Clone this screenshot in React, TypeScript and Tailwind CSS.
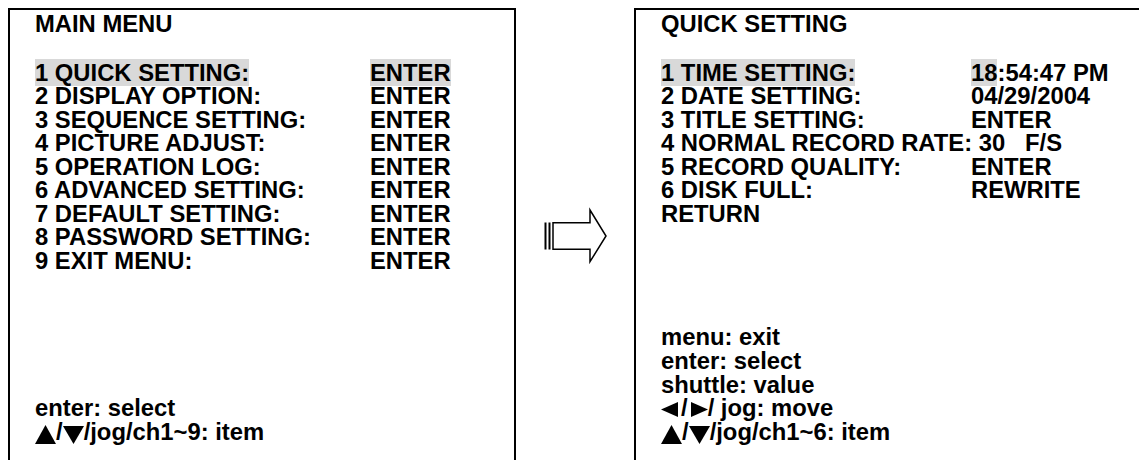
import React from "react";

const font = { fontFamily: '"Liberation Sans", Arial, Helvetica, sans-serif' };

function Up() {
  return (
    <svg width="21" height="19" viewBox="0 0 21 19" className="inline-block align-[-4px]">
      <path d="M10.5 0 L21 19 H0 Z" fill="#000" />
    </svg>
  );
}
function Down() {
  return (
    <svg width="21" height="18" viewBox="0 0 21 18" className="inline-block align-[-4px]">
      <path d="M0 0 H21 L10.5 18 Z" fill="#000" />
    </svg>
  );
}
function Left() {
  return (
    <svg width="18" height="15" viewBox="0 0 18 15" className="inline-block align-[-1px] mr-[2px]">
      <path d="M0 7.5 L17 0 V15 Z" fill="#000" />
    </svg>
  );
}
function Right() {
  return (
    <svg width="18" height="15" viewBox="0 0 18 15" className="inline-block align-[-1px] ml-[2px]">
      <path d="M1 0 L18 7.5 L1 15 Z" fill="#000" />
    </svg>
  );
}

function Panel({
  title,
  rows,
  labelWidth,
  footer,
  width,
}: {
  title: string;
  rows: React.ReactNode[][];
  labelWidth: string;
  footer: React.ReactNode[];
  width: string;
}) {
  return (
    <div
      className={`${width} h-[470px] shrink-0 border-x-2 border-t-2 border-black flex flex-col pt-[2px] pl-[25px] pb-[34px] text-[23.8px] leading-[23.5px] font-bold text-black`}
    >
      <div className="whitespace-pre">{title}</div>
      <div className="mt-[25.5px] flex flex-col">
        {rows.map((r, i) => (
          <div key={i} className="flex whitespace-pre h-[23.46px] leading-[23.46px]">
            <div className={`${labelWidth} shrink-0`}>{r[0]}</div>
            <div>{r[1]}</div>
          </div>
        ))}
      </div>
      <div className="mt-auto flex flex-col">
        {footer.map((f, i) => (
          <div key={i} className="whitespace-pre h-[23.8px] leading-[23.8px]">
            {f}
          </div>
        ))}
      </div>
    </div>
  );
}

export default function App() {
  const hl = "bg-[#d9d9d9]";
  const leftRows: React.ReactNode[][] = [
    [<span className={hl}>1 QUICK SETTING:</span>, <span className={hl}>ENTER</span>],
    ["2 DISPLAY OPTION:", "ENTER"],
    ["3 SEQUENCE SETTING:", "ENTER"],
    ["4 PICTURE ADJUST:", "ENTER"],
    ["5 OPERATION LOG:", "ENTER"],
    ["6 ADVANCED SETTING:", "ENTER"],
    ["7 DEFAULT SETTING:", "ENTER"],
    ["8 PASSWORD SETTING:", "ENTER"],
    ["9 EXIT MENU:", "ENTER"],
  ];
  const rightRows: React.ReactNode[][] = [
    [
      <span className={hl}>1 TIME SETTING:</span>,
      <span>
        <span className={hl}>18</span>:54:47 PM
      </span>,
    ],
    ["2 DATE SETTING:", "04/29/2004"],
    ["3 TITLE SETTING:", "ENTER"],
    [<span className="relative z-10">4 NORMAL RECORD RATE: 30   F/S</span>, ""],
    ["5 RECORD QUALITY:", "ENTER"],
    ["6 DISK FULL:", "REWRITE"],
    ["RETURN", ""],
  ];
  return (
    <div
      className="w-[1139px] h-[460px] overflow-hidden bg-white flex items-start pt-2 pl-2"
      style={font}
    >
      <Panel
        width="w-[508px]"
        title="MAIN MENU"
        rows={leftRows}
        labelWidth="w-[335px]"
        footer={[
          "enter: select",
          <span>
            <Up />/<Down />/jog/ch1~9: item
          </span>,
        ]}
      />
      <svg width="118" height="262" viewBox="0 0 118 262" className="shrink-0">
        <rect x="28.5" y="214.5" width="2" height="27" fill="#000" />
        <rect x="32.5" y="214.5" width="2" height="27" fill="#000" />
        <path
          d="M37 214.7 H74 V202 L90 228 L74 253.7 V241.3 H37 Z"
          fill="#fff"
          stroke="#000"
          strokeWidth="1.5"
          strokeLinejoin="miter"
        />
      </svg>
      <Panel
        width="w-[540px]"
        title="QUICK SETTING"
        rows={rightRows}
        labelWidth="w-[310px]"
        footer={[
          "menu: exit",
          "enter: select",
          "shuttle: value",
          <span>
            <Left />/<Right />/ jog: move
          </span>,
          <span>
            <Up />/<Down />/jog/ch1~6: item
          </span>,
        ]}
      />
    </div>
  );
}
